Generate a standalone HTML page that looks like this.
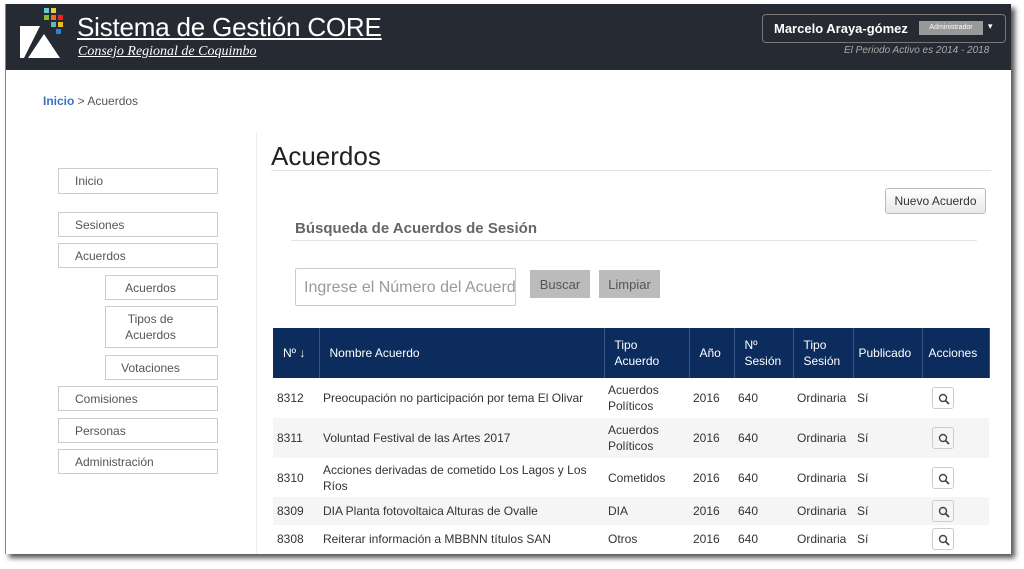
<!DOCTYPE html>
<html><head><meta charset="utf-8"><style>
*{box-sizing:border-box;margin:0;padding:0}
body{width:1024px;height:569px;background:#fff;font-family:"Liberation Sans",sans-serif;position:relative;overflow:hidden;color:#333}
.frame{position:absolute;left:5px;top:4px;width:1006px;height:550px;background:#fff;border-left:1px solid #888;box-shadow:4px 4px 5px #555;overflow:hidden}
.hdr{position:absolute;left:0;top:0;width:1006px;height:66px;background:#262a33}
.a{position:absolute}
.side{position:absolute;border:1px solid #ccc;background:#fff;font-size:12px;color:#555;padding-left:16px;display:flex;align-items:center}
.side.s{padding-left:0;padding-right:22px;justify-content:center;text-align:center;line-height:16px}
table{position:absolute;left:267px;top:324px;border-collapse:collapse;font-size:12px;table-layout:fixed}
th{background:#0d2c5e;color:#fff;font-weight:normal;text-align:left;padding:0 4px 0 10px;height:50px;border-right:1px solid #3a5580;line-height:16px}
td{padding:0 4px;color:#333;line-height:16px}
tr.o td{background:#f5f5f5}
td.mg span{display:inline-block;width:22px;height:22px;border:1px solid #ccc;border-radius:3px;margin-left:6px;vertical-align:middle;position:relative}
td.mg svg{position:absolute;left:5px;top:5px}
.btn{position:absolute;background:#bbb;color:#555;font-size:13px;display:flex;align-items:center;justify-content:center}
</style></head><body>
<div class="frame">
<div class="hdr">
 <svg class="a" style="left:12px;top:2px" width="52" height="56">
  <rect x="26" y="2" width="5" height="5" fill="#6cc"/><rect x="33" y="2" width="5" height="5" fill="#ec3"/>
  <rect x="26" y="9" width="5" height="5" fill="#8b3"/><rect x="33" y="9" width="5" height="5" fill="#e63"/><rect x="40" y="9" width="5" height="5" fill="#e22"/>
  <rect x="33" y="16" width="5" height="5" fill="#5bb"/><rect x="40" y="16" width="5" height="5" fill="#eb2"/>
  <rect x="38" y="23" width="5" height="5" fill="#28c"/>
  <polygon points="2,20 22,20 6,52 2,52" fill="#fff"/><polygon points="26,28 42,52 10,52" fill="#fff"/>
 </svg>
 <div class="a" style="left:71px;top:8px;font-size:26px;color:#fff;text-decoration:underline;letter-spacing:-0.2px">Sistema de Gestión CORE</div>
 <div class="a" style="left:72px;top:40px;font-size:14px;color:#fff;font-family:'Liberation Serif',serif;font-style:italic;text-decoration:underline">Consejo Regional de Coquimbo</div>
 <div class="a" style="left:756px;top:10px;width:244px;height:29px;border:1px solid #777;border-radius:4px"></div>
 <div class="a" style="left:768px;top:17px;font-size:13px;color:#fff;font-weight:bold">Marcelo Araya-gómez</div>
 <div class="a" style="left:913px;top:17px;width:64px;height:14px;background:#999;color:#fff;font-size:7px;text-align:center;line-height:14px">Administrador</div>
 <div class="a" style="left:982px;top:17px;color:#fff;font-size:9px">▾</div>
 <div class="a" style="left:838px;top:41px;font-size:10px;color:#aaa;font-style:italic">El Periodo Activo es 2014 - 2018</div>
</div>
<div class="a" style="left:37px;top:90px;font-size:12px;color:#555"><b style="color:#3a72c0;font-weight:bold">Inicio</b> &gt; Acuerdos</div>
<div class="a" style="left:250px;top:128px;width:1px;height:430px;background:#eee"></div>
<div class="side" style="left:52px;top:164px;width:160px;height:26px">Inicio</div>
<div class="side" style="left:52px;top:208px;width:160px;height:25px">Sesiones</div>
<div class="side" style="left:52px;top:239px;width:160px;height:25px">Acuerdos</div>
<div class="side s" style="left:99px;top:271px;width:113px;height:25px">Acuerdos</div>
<div class="side s" style="left:99px;top:302px;width:113px;height:42px">Tipos de<br>Acuerdos</div>
<div class="side s" style="left:99px;top:351px;width:113px;height:25px">Votaciones</div>
<div class="side" style="left:52px;top:382px;width:160px;height:25px">Comisiones</div>
<div class="side" style="left:52px;top:414px;width:160px;height:25px">Personas</div>
<div class="side" style="left:52px;top:445px;width:160px;height:25px">Administración</div>
<div class="a" style="left:265px;top:137px;font-size:26px;color:#222">Acuerdos</div>
<div class="a" style="left:265px;top:166px;width:720px;height:1px;background:#e3e3e3"></div>
<div class="a" style="left:879px;top:184px;width:101px;height:26px;border:1px solid #bbb;border-radius:3px;background:linear-gradient(#fff,#e8e8e8);font-size:12px;color:#333;text-align:center;line-height:24px">Nuevo Acuerdo</div>
<div class="a" style="left:289px;top:216px;font-size:15px;font-weight:bold;color:#666">Búsqueda de Acuerdos de Sesión</div>
<div class="a" style="left:285px;top:236px;width:686px;height:1px;background:#e3e3e3"></div>
<div class="a" style="left:289px;top:264px;width:221px;height:38px;border:1px solid #ccc;border-radius:2px;font-size:16px;color:#999;padding:10px 0 0 8px;white-space:nowrap;overflow:hidden">Ingrese el Número del Acuerdo</div>
<div class="btn" style="left:524px;top:266px;width:60px;height:28px">Buscar</div>
<div class="btn" style="left:593px;top:266px;width:61px;height:28px">Limpiar</div>
<table>
<colgroup><col style="width:46px"><col style="width:285px"><col style="width:85px"><col style="width:45px"><col style="width:59px"><col style="width:60px"><col style="width:69px"><col style="width:67px"></colgroup>
<tr><th>Nº ↓</th><th>Nombre Acuerdo</th><th>Tipo<br>Acuerdo</th><th>Año</th><th>Nº<br>Sesión</th><th>Tipo<br>Sesión</th><th style="padding-left:5px">Publicado</th><th style="padding-left:6px">Acciones</th></tr>
<tr style="height:40px"><td>8312</td><td>Preocupación no participación por tema El Olivar</td><td>Acuerdos Políticos</td><td>2016</td><td>640</td><td>Ordinaria</td><td>Sí</td><td class="mg"><span><svg width="12" height="12"><circle cx="5" cy="5" r="3.5" fill="none" stroke="#444" stroke-width="1.4"/><path d="M7.5 7.5L11 11" stroke="#444" stroke-width="1.8"/></svg></span></td></tr>
<tr class="o" style="height:40px"><td>8311</td><td>Voluntad Festival de las Artes 2017</td><td>Acuerdos Políticos</td><td>2016</td><td>640</td><td>Ordinaria</td><td>Sí</td><td class="mg"><span><svg width="12" height="12"><circle cx="5" cy="5" r="3.5" fill="none" stroke="#444" stroke-width="1.4"/><path d="M7.5 7.5L11 11" stroke="#444" stroke-width="1.8"/></svg></span></td></tr>
<tr style="height:39px"><td>8310</td><td>Acciones derivadas de cometido Los Lagos y Los Ríos</td><td>Cometidos</td><td>2016</td><td>640</td><td>Ordinaria</td><td>Sí</td><td class="mg"><span><svg width="12" height="12"><circle cx="5" cy="5" r="3.5" fill="none" stroke="#444" stroke-width="1.4"/><path d="M7.5 7.5L11 11" stroke="#444" stroke-width="1.8"/></svg></span></td></tr>
<tr class="o" style="height:28px"><td>8309</td><td>DIA Planta fotovoltaica Alturas de Ovalle</td><td>DIA</td><td>2016</td><td>640</td><td>Ordinaria</td><td>Sí</td><td class="mg"><span><svg width="12" height="12"><circle cx="5" cy="5" r="3.5" fill="none" stroke="#444" stroke-width="1.4"/><path d="M7.5 7.5L11 11" stroke="#444" stroke-width="1.8"/></svg></span></td></tr>
<tr style="height:28px"><td>8308</td><td>Reiterar información a MBBNN títulos SAN</td><td>Otros</td><td>2016</td><td>640</td><td>Ordinaria</td><td>Sí</td><td class="mg"><span><svg width="12" height="12"><circle cx="5" cy="5" r="3.5" fill="none" stroke="#444" stroke-width="1.4"/><path d="M7.5 7.5L11 11" stroke="#444" stroke-width="1.8"/></svg></span></td></tr>
</table>
</div>
</body></html>
